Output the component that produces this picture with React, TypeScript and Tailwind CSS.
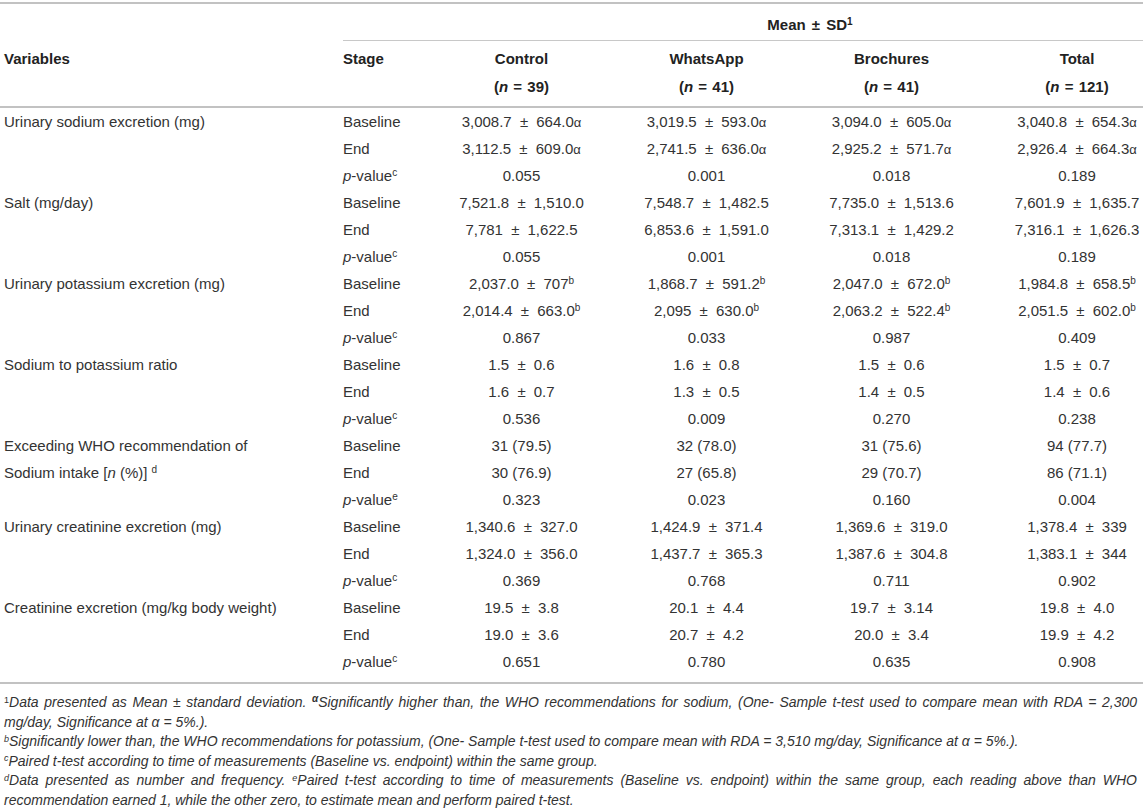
type Cell = { v: string; suf?: "a" | "b" };
type Group = { label: React.ReactNode; pSup: string; rows: [string, Cell[]][] };

const a = (v: string): Cell => ({ v, suf: "a" });
const b = (v: string): Cell => ({ v, suf: "b" });
const p = (v: string): Cell => ({ v });

const groups: Group[] = [
  {
    label: "Urinary sodium excretion (mg)",
    pSup: "c",
    rows: [
      ["Baseline", [a("3,008.7 ± 664.0"), a("3,019.5 ± 593.0"), a("3,094.0 ± 605.0"), a("3,040.8 ± 654.3")]],
      ["End", [a("3,112.5 ± 609.0"), a("2,741.5 ± 636.0"), a("2,925.2 ± 571.7"), a("2,926.4 ± 664.3")]],
      ["p", [p("0.055"), p("0.001"), p("0.018"), p("0.189")]],
    ],
  },
  {
    label: "Salt (mg/day)",
    pSup: "c",
    rows: [
      ["Baseline", [p("7,521.8 ± 1,510.0"), p("7,548.7 ± 1,482.5"), p("7,735.0 ± 1,513.6"), p("7,601.9 ± 1,635.7")]],
      ["End", [p("7,781 ± 1,622.5"), p("6,853.6 ± 1,591.0"), p("7,313.1 ± 1,429.2"), p("7,316.1 ± 1,626.3")]],
      ["p", [p("0.055"), p("0.001"), p("0.018"), p("0.189")]],
    ],
  },
  {
    label: "Urinary potassium excretion (mg)",
    pSup: "c",
    rows: [
      ["Baseline", [b("2,037.0 ± 707"), b("1,868.7 ± 591.2"), b("2,047.0 ± 672.0"), b("1,984.8 ± 658.5")]],
      ["End", [b("2,014.4 ± 663.0"), b("2,095 ± 630.0"), b("2,063.2 ± 522.4"), b("2,051.5 ± 602.0")]],
      ["p", [p("0.867"), p("0.033"), p("0.987"), p("0.409")]],
    ],
  },
  {
    label: "Sodium to potassium ratio",
    pSup: "c",
    rows: [
      ["Baseline", [p("1.5 ± 0.6"), p("1.6 ± 0.8"), p("1.5 ± 0.6"), p("1.5 ± 0.7")]],
      ["End", [p("1.6 ± 0.7"), p("1.3 ± 0.5"), p("1.4 ± 0.5"), p("1.4 ± 0.6")]],
      ["p", [p("0.536"), p("0.009"), p("0.270"), p("0.238")]],
    ],
  },
  {
    label: (
      <>
        Exceeding WHO recommendation of
        <br />
        Sodium intake [<i>n</i> (%)] <sup className="text-[10px]">d</sup>
      </>
    ),
    pSup: "e",
    rows: [
      ["Baseline", [p("31 (79.5)"), p("32 (78.0)"), p("31 (75.6)"), p("94 (77.7)")]],
      ["End", [p("30 (76.9)"), p("27 (65.8)"), p("29 (70.7)"), p("86 (71.1)")]],
      ["p", [p("0.323"), p("0.023"), p("0.160"), p("0.004")]],
    ],
  },
  {
    label: "Urinary creatinine excretion (mg)",
    pSup: "c",
    rows: [
      ["Baseline", [p("1,340.6 ± 327.0"), p("1,424.9 ± 371.4"), p("1,369.6 ± 319.0"), p("1,378.4 ± 339")]],
      ["End", [p("1,324.0 ± 356.0"), p("1,437.7 ± 365.3"), p("1,387.6 ± 304.8"), p("1,383.1 ± 344")]],
      ["p", [p("0.369"), p("0.768"), p("0.711"), p("0.902")]],
    ],
  },
  {
    label: "Creatinine excretion (mg/kg body weight)",
    pSup: "c",
    rows: [
      ["Baseline", [p("19.5 ± 3.8"), p("20.1 ± 4.4"), p("19.7 ± 3.14"), p("19.8 ± 4.0")]],
      ["End", [p("19.0 ± 3.6"), p("20.7 ± 4.2"), p("20.0 ± 3.4"), p("19.9 ± 4.2")]],
      ["p", [p("0.651"), p("0.780"), p("0.635"), p("0.908")]],
    ],
  },
];

const heads = [
  { name: "Control", n: "39" },
  { name: "WhatsApp", n: "41" },
  { name: "Brochures", n: "41" },
  { name: "Total", n: "121" },
];

const colPad = ["", "", "", "pl-[27px]"];
const grid = "grid grid-cols-[343px_86px_185px_185px_185px_159px]";

function Value({ c }: { c: Cell }) {
  const [left, right] = c.v.split(" ± ");
  return (
    <>
      {left}
      {right !== undefined && (
        <>
          {" "}
          <span className="mx-[4px]">±</span> {right}
        </>
      )}
      {c.suf === "a" && <span className="text-[13px]">α</span>}
      {c.suf === "b" && <sup className="text-[10px]">b</sup>}
    </>
  );
}

export default function App() {
  return (
    <div className="w-[1143px] overflow-hidden bg-white pt-[2px] text-[15px] text-[#333] font-['Liberation_Sans',Arial,sans-serif]">
      {/* header */}
      <div className="border-t-2 border-[#c2c2c2]">
        <div className={grid}>
          <div />
          <div className="col-span-5 border-b border-[#c8c8c8] pt-[11px] pb-[5px] pl-[134px] text-center font-bold leading-[20px] text-[#222]">
            Mean <span className="mx-[2px]">±</span> SD<sup className="text-[10px]">1</sup>
          </div>
        </div>
        <div className={`${grid} border-b-2 border-[#c2c2c2] pt-[4px] pb-[5px] font-bold leading-[28px] text-[#222]`}>
          <div className="pl-[4px]">Variables</div>
          <div>Stage</div>
          {heads.map((h, i) => (
            <div key={h.name} className={`text-center ${colPad[i]}`}>
              <div>{h.name}</div>
              <div>
                (<i>n</i> <span className="mx-[1px]">=</span> {h.n})
              </div>
            </div>
          ))}
        </div>
      </div>

      {/* body */}
      <div className={`${grid} auto-rows-[27px] border-b-2 border-[#c2c2c2] pb-[7px] leading-[27px]`}>
        {groups.map((g, gi) => [
          <div key={`l${gi}`} className="col-start-1 row-span-3 whitespace-nowrap pl-[4px]">
            {g.label}
          </div>,
          ...g.rows.map(([stage, cells], ri) => [
            <div key={`s${gi}-${ri}`} className="col-start-2 whitespace-nowrap">
              {stage === "p" ? (
                <>
                  <i>p</i>-value<sup className="text-[10px]">{g.pSup}</sup>
                </>
              ) : (
                stage
              )}
            </div>,
            ...cells.map((c, ci) => (
              <div key={`v${gi}-${ri}-${ci}`} className={`whitespace-nowrap text-center ${colPad[ci]}`}>
                <Value c={c} />
              </div>
            )),
          ]),
        ])}
      </div>

      {/* footnotes */}
      <div className="pt-[9px] pl-[4px] pr-[6px] text-justify text-[14px] italic leading-[19.5px] text-[#333]">
        <p>
          <sup className="not-italic text-[9px]">1</sup>Data presented as Mean ± standard deviation.{" "}
          <sup className="font-bold text-[10px]">α</sup>Significantly higher than, the WHO recommendations for sodium, (One- Sample
          t-test used to compare mean with RDA = 2,300 mg/day, Significance at α = 5%.).
        </p>
        <p>
          <sup className="text-[9px]">b</sup>Significantly lower than, the WHO recommendations for potassium, (One- Sample t-test used to
          compare mean with RDA = 3,510 mg/day, Significance at α = 5%.).
        </p>
        <p>
          <sup className="text-[9px]">c</sup>Paired t-test according to time of measurements (Baseline vs. endpoint) within the same group.
        </p>
        <p>
          <sup className="text-[9px]">d</sup>Data presented as number and frequency. <sup className="text-[9px]">e</sup>Paired t-test
          according to time of measurements (Baseline vs. endpoint) within the same group, each reading above than WHO recommendation
          earned 1, while the other zero, to estimate mean and perform paired t-test.
        </p>
      </div>
    </div>
  );
}
